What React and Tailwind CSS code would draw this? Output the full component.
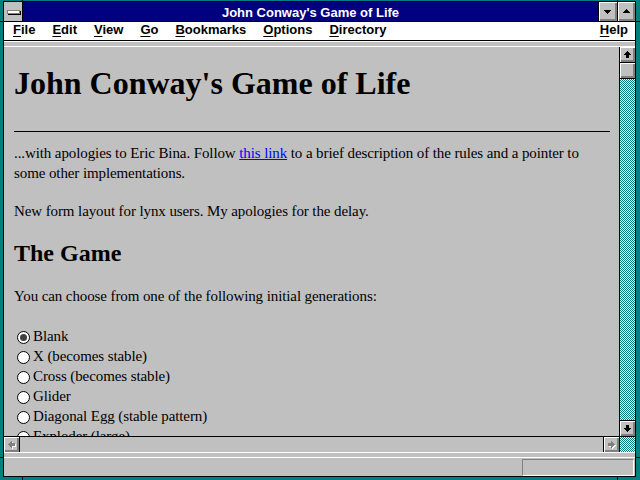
import React from "react";

const bevel = "bg-[#c0c0c0] shadow-[inset_1px_1px_0_#ffffff,inset_-1px_-1px_0_#808080,inset_-2px_-2px_0_#808080]";
const checker =
  "bg-[image:repeating-conic-gradient(#008080_0_25%,#ffffff_0_50%)] bg-[length:2px_2px]";

const options = [
  { label: "Blank", selected: true },
  { label: "X (becomes stable)" },
  { label: "Cross (becomes stable)" },
  { label: "Glider" },
  { label: "Diagonal Egg (stable pattern)" },
  { label: "Exploder (large)" },
  { label: "Tumbler (oscillator)" },
];

const menus = ["File", "Edit", "View", "Go", "Bookmarks", "Options", "Directory"];

// pixel arrows, drawn as little rect stacks
const ArrowUp = () => (
  <svg width="15" height="15" viewBox="0 0 15 15" shapeRendering="crispEdges">
    <rect x="7" y="4" width="1" height="1" />
    <rect x="6" y="5" width="3" height="1" />
    <rect x="5" y="6" width="5" height="1" />
    <rect x="4" y="7" width="7" height="1" />
    <rect x="6" y="8" width="3" height="3" />
  </svg>
);

const ArrowDown = () => (
  <svg width="15" height="15" viewBox="0 0 15 15" shapeRendering="crispEdges">
    <rect x="6" y="4" width="3" height="3" />
    <rect x="4" y="7" width="7" height="1" />
    <rect x="5" y="8" width="5" height="1" />
    <rect x="6" y="9" width="3" height="1" />
    <rect x="7" y="10" width="1" height="1" />
  </svg>
);

const leftRects = (dx, dy) => (
  <>
    <rect x={4 + dx} y={7 + dy} width="1" height="1" />
    <rect x={5 + dx} y={6 + dy} width="1" height="3" />
    <rect x={6 + dx} y={5 + dy} width="1" height="5" />
    <rect x={7 + dx} y={4 + dy} width="1" height="7" />
    <rect x={8 + dx} y={6 + dy} width="3" height="3" />
  </>
);

const ArrowLeftOff = ({ flip }) => (
  <svg
    width="15"
    height="15"
    viewBox="0 0 15 15"
    shapeRendering="crispEdges"
    className={flip ? "-scale-x-100" : ""}
  >
    <g fill="#ffffff">{leftRects(flip ? -1 : 1, 1)}</g>
    <g fill="#808080">{leftRects(0, 0)}</g>
  </svg>
);

const Tri = ({ up }) => (
  <svg width="18" height="19" viewBox="0 0 18 19" shapeRendering="crispEdges">
    {up ? (
      <>
        <rect x="8" y="7" width="1" height="1" />
        <rect x="7" y="8" width="3" height="1" />
        <rect x="6" y="9" width="5" height="1" />
        <rect x="5" y="10" width="7" height="1" />
      </>
    ) : (
      <>
        <rect x="5" y="8" width="7" height="1" />
        <rect x="6" y="9" width="5" height="1" />
        <rect x="7" y="10" width="3" height="1" />
        <rect x="8" y="11" width="1" height="1" />
      </>
    )}
  </svg>
);

export default function App() {
  return (
    <div className="relative w-[640px] h-[480px] bg-[#008080] pt-[1px] pl-[3px] pr-[4px] pb-[3px] font-['Liberation_Sans',Arial,sans-serif]">
      {/* frame corner ticks */}
      <div className="absolute left-[22px] top-0 w-px h-[1px] bg-black" />
      <div className="absolute left-[617px] top-0 w-px h-[1px] bg-black" />
      <div className="absolute left-[22px] bottom-0 w-px h-[3px] bg-black" />
      <div className="absolute left-[617px] bottom-0 w-px h-[3px] bg-black" />
      <div className="absolute left-0 top-[21px] w-[3px] h-px bg-black" />
      <div className="absolute right-0 top-[21px] w-[4px] h-px bg-black" />
      <div className="absolute left-0 top-[457px] w-[3px] h-px bg-black" />
      <div className="absolute right-0 top-[457px] w-[4px] h-px bg-black" />

      <div className="h-full border border-black flex flex-col bg-[#c0c0c0]">
        {/* title bar */}
        <div className="h-[20px] flex border-b border-black shrink-0">
          <div className="w-[19px] border-r border-black bg-[#c0c0c0] flex items-center justify-center">
            <div className="w-[13px] h-[4px] bg-white border border-[#808080] shadow-[1px_1px_0_#000000]" />
          </div>
          <div className="flex-1 bg-[#000080] text-white text-[13px] font-bold leading-[14px] flex justify-center pt-[4px]">
            John Conway's Game of Life
          </div>
          <div className={`w-[19px] border-l border-black ${bevel}`}>
            <Tri />
          </div>
          <div className={`w-[18px] border-l border-black ${bevel}`}>
            <Tri up />
          </div>
        </div>

        {/* menu bar */}
        <div className="h-[19px] bg-white border-b border-black flex items-start pt-[1px] pl-[9px] pr-[7px] text-[13px] font-bold leading-[14px] text-black shrink-0">
          <div className="flex gap-[17px]">
            {menus.map((m) => (
              <span key={m}>
                <span className="underline underline-offset-[2px]">{m[0]}</span>
                {m.slice(1)}
              </span>
            ))}
          </div>
          <span className="ml-auto">
            <span className="underline underline-offset-[2px]">H</span>elp
          </span>
        </div>

        <div className="h-[6px] border-t border-white border-b border-black bg-[#c0c0c0] shrink-0" />

        {/* document + scrollbars */}
        <div className="h-[405px] flex shrink-0">
          <div className="flex-1 flex flex-col min-w-0">
            <div className="h-[389px] overflow-hidden pl-[10px] pr-[9px] font-['Liberation_Serif','Times_New_Roman',serif] text-black text-[15px] tracking-[-0.1px] leading-[20px]">
              <h1 className="mt-[18px] text-[32px] tracking-normal leading-[36px] font-bold">
                John Conway's Game of Life
              </h1>
              <div className="mt-[30px] border-t border-black" />
              <p className="mt-[11px]">
                ...with apologies to Eric Bina. Follow{" "}
                <a className="text-[#0000ff] underline">this link</a> to a brief
                description of the rules and a pointer to some other
                implementations.
              </p>
              <p className="mt-[18px]">
                New form layout for lynx users. My apologies for the delay.
              </p>
              <h2 className="mt-[18px] text-[24px] tracking-normal leading-[28px] font-bold">The Game</h2>
              <p className="mt-[19px]">
                You can choose from one of the following initial generations:
              </p>
              <div className="mt-[20px]">
                {options.map((o) => (
                  <div key={o.label} className="flex h-[20px]">
                    <span className="mt-[5px] ml-[3px] mr-[3px] w-[13px] h-[13px] rounded-full border border-black bg-white flex items-center justify-center shrink-0">
                      {o.selected && <span className="w-[7px] h-[7px] rounded-full bg-[#404040]" />}
                    </span>
                    <span>{o.label}</span>
                  </div>
                ))}
              </div>
            </div>
            {/* horizontal scrollbar */}
            <div className="h-[16px] border-t border-black flex bg-[#c0c0c0]">
              <div className={`w-[16px] border-r border-black ${bevel}`}>
                <ArrowLeftOff />
              </div>
              <div className="flex-1" />
              <div className={`w-[16px] border-l border-black ${bevel}`}>
                <ArrowLeftOff flip />
              </div>
            </div>
          </div>

          {/* vertical scrollbar */}
          <div className="w-[16px] border-l border-black flex flex-col">
            <div className={`h-[16px] border-b border-black ${bevel}`}>
              <ArrowUp />
            </div>
            <div className={`h-[16px] border-b border-black ${bevel}`} />
            <div className={`flex-1 ${checker}`} />
            <div className={`h-[17px] border-t border-b border-black ${bevel}`}>
              <ArrowDown />
            </div>
            <div className={`h-[15px] ${checker}`} />
          </div>
        </div>

        <div className="h-[6px] border-t border-white border-b border-black bg-[#c0c0c0] shrink-0" />

        {/* status bar */}
        <div className="h-[18px] flex justify-end pt-[1px] pr-[1px] bg-[#c0c0c0] shrink-0">
          <div className="w-[112px] h-[17px] border-t border-l border-[#808080] border-b border-r border-b-white border-r-white" />
        </div>
      </div>
    </div>
  );
}
